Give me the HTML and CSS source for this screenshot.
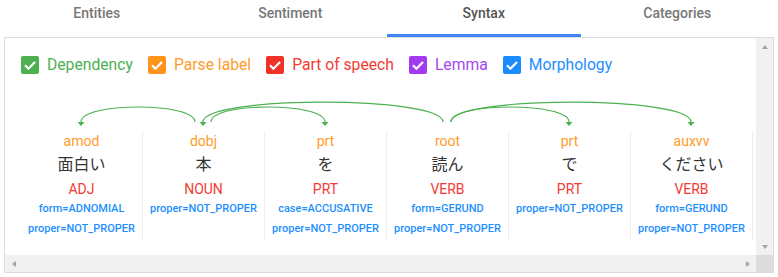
FILE: index.html
```html
<!DOCTYPE html>
<html lang="ja">
<head>
  <meta charset="UTF-8" />
  <meta name="viewport" content="width=device-width, initial-scale=1.0"/>
  <title>Syntax</title>
  <link rel="stylesheet" href="styles.css">
</head>
<body>
  <nav class="tabs">
    <div class="tab">Entities</div>
    <div class="tab">Sentiment</div>
    <div class="tab active">Syntax</div>
    <div class="tab">Categories</div>
  </nav>

  <div class="panel">
    <div class="panel-content">
      <div class="toggles">
        <label class="toggle green">
          <svg class="box" width="18" height="18" viewBox="0 0 18 18"><rect width="18" height="18" rx="2"/><polyline points="4,9.3 7.4,12.7 14,6" /></svg>
          Dependency
        </label>
        <label class="toggle orange">
          <svg class="box" width="18" height="18" viewBox="0 0 18 18"><rect width="18" height="18" rx="2"/><polyline points="4,9.3 7.4,12.7 14,6" /></svg>
          Parse label
        </label>
        <label class="toggle red">
          <svg class="box" width="18" height="18" viewBox="0 0 18 18"><rect width="18" height="18" rx="2"/><polyline points="4,9.3 7.4,12.7 14,6" /></svg>
          Part of speech
        </label>
        <label class="toggle purple">
          <svg class="box" width="18" height="18" viewBox="0 0 18 18"><rect width="18" height="18" rx="2"/><polyline points="4,9.3 7.4,12.7 14,6" /></svg>
          Lemma
        </label>
        <label class="toggle blue">
          <svg class="box" width="18" height="18" viewBox="0 0 18 18"><rect width="18" height="18" rx="2"/><polyline points="4,9.3 7.4,12.7 14,6" /></svg>
          Morphology
        </label>
      </div>

      <svg class="arcs" width="732" height="39" viewBox="0 0 732 39">
        <path d="M174 30 C174 10, 60 10, 60 30" />
        <path d="M422 30 C422 3.5, 182 3.5, 182 30" />
        <path d="M190 30 C190 10, 304 10, 304 30" />
        <path d="M430 30 C430 10, 548 10, 548 30" />
        <path d="M430 30 C430 3.5, 670 3.5, 670 30" />
        <polygon points="56.5,30 63.5,30 60,34" />
        <polygon points="178.5,30 185.5,30 182,34" />
        <polygon points="300.5,30 307.5,30 304,34" />
        <polygon points="544.5,30 551.5,30 548,34" />
        <polygon points="666.5,30 673.5,30 670,34" />
      </svg>

      <div class="tokens">
        <div class="token">
          <div class="label">amod</div>
          <div class="word">面白い</div>
          <div class="pos">ADJ</div>
          <div class="morph">form=ADNOMIAL</div>
          <div class="morph">proper=NOT_PROPER</div>
        </div>
        <div class="token">
          <div class="label">dobj</div>
          <div class="word">本</div>
          <div class="pos">NOUN</div>
          <div class="morph">proper=NOT_PROPER</div>
        </div>
        <div class="token">
          <div class="label">prt</div>
          <div class="word">を</div>
          <div class="pos">PRT</div>
          <div class="morph">case=ACCUSATIVE</div>
          <div class="morph">proper=NOT_PROPER</div>
        </div>
        <div class="token">
          <div class="label">root</div>
          <div class="word">読ん</div>
          <div class="pos">VERB</div>
          <div class="morph">form=GERUND</div>
          <div class="morph">proper=NOT_PROPER</div>
        </div>
        <div class="token">
          <div class="label">prt</div>
          <div class="word">で</div>
          <div class="pos">PRT</div>
          <div class="morph">proper=NOT_PROPER</div>
        </div>
        <div class="token">
          <div class="label">auxvv</div>
          <div class="word">ください</div>
          <div class="pos">VERB</div>
          <div class="morph">form=GERUND</div>
          <div class="morph">proper=NOT_PROPER</div>
        </div>
      </div>
    </div>

    <div class="scrollbar vertical">
      <span class="sb-btn"><i class="arrow up"></i></span>
      <span class="sb-btn"><i class="arrow down"></i></span>
    </div>
    <div class="scrollbar horizontal">
      <span class="sb-btn"><i class="arrow left"></i></span>
      <span class="sb-btn"><i class="arrow right"></i></span>
    </div>
    <div class="scroll-corner"></div>
  </div>
</body>
</html>
```

FILE: styles.css
```css
* {
  box-sizing: border-box;
  margin: 0;
  padding: 0;
}

body {
  font-family: Roboto, 'Noto Sans CJK JP', sans-serif;
  background: #fff;
  color: #333;
  width: 778px;
  height: 277px;
  overflow: hidden;
}

/* tabs */
.tabs {
  display: flex;
  width: 774px;
  height: 37px;
}

.tab {
  flex: 1;
  text-align: center;
  font-size: 14px;
  font-weight: 500;
  line-height: 26px;
  color: #777;
  border-bottom: 3px solid transparent;
}

.tab.active {
  color: #555;
  border-bottom-color: #4285f4;
}

/* panel */
.panel {
  margin-left: 4px;
  width: 770px;
  height: 236px;
  border: 1px solid #dcdcdc;
  display: grid;
  grid-template-columns: 1fr 17px;
  grid-template-rows: 1fr 17px;
}

.panel-content {
  overflow: hidden;
  padding: 18px 16px 0;
}

.toggles {
  display: flex;
  gap: 15px;
  height: 18px;
}

.toggle {
  display: flex;
  align-items: center;
  gap: 8px;
  font-size: 15.7px;
  line-height: 18px;
}

.box {
  display: block;
  flex-shrink: 0;
}

.box polyline {
  fill: none;
  stroke: #fff;
  stroke-width: 2.2;
}

.green { color: #4caf50; }
.green rect { fill: #4caf50; }
.orange { color: #ff9b2a; }
.orange rect { fill: #ff931c; }
.red { color: #f23b33; }
.red rect { fill: #ef3127; }
.purple { color: #a546f0; }
.purple rect { fill: #a23bf0; }
.blue { color: #1e8fff; }
.blue rect { fill: #1a8cff; }

.arcs {
  display: block;
  margin-top: 18px;
}

.arcs path {
  fill: none;
  stroke: #4caf50;
  stroke-width: 1.2;
}

.arcs polygon {
  fill: #4caf50;
}

.tokens {
  display: flex;
}

.token {
  width: 122px;
  flex-shrink: 0;
  border-right: 1px solid #eee;
  text-align: center;
  padding-bottom: 1px;
}

.label {
  font-size: 14px;
  line-height: 20px;
  color: #ff9b2a;
}

.word {
  font-size: 16px;
  line-height: 28px;
  color: #333;
}

.pos {
  font-size: 14px;
  line-height: 20px;
  color: #f23b33;
}

.morph {
  font-size: 11px;
  font-weight: 500;
  line-height: 20px;
  color: #1e8fff;
  white-space: nowrap;
}

/* fake scrollbars */
.scrollbar {
  background: #f1f1f1;
  display: flex;
  justify-content: space-between;
}

.scrollbar.vertical {
  flex-direction: column;
}

.sb-btn {
  width: 17px;
  height: 17px;
  display: flex;
  align-items: center;
  justify-content: center;
}

.arrow {
  width: 0;
  height: 0;
  border: 0 solid transparent;
}

.arrow.up {
  border-left-width: 3.5px;
  border-right-width: 3.5px;
  border-bottom: 4px solid #a3a3a3;
}

.arrow.down {
  border-left-width: 3.5px;
  border-right-width: 3.5px;
  border-top: 4px solid #a3a3a3;
}

.arrow.left {
  border-top-width: 3.5px;
  border-bottom-width: 3.5px;
  border-right: 4px solid #a3a3a3;
}

.arrow.right {
  border-top-width: 3.5px;
  border-bottom-width: 3.5px;
  border-left: 4px solid #a3a3a3;
}

.scroll-corner {
  background: #dcdcdc;
}
```
